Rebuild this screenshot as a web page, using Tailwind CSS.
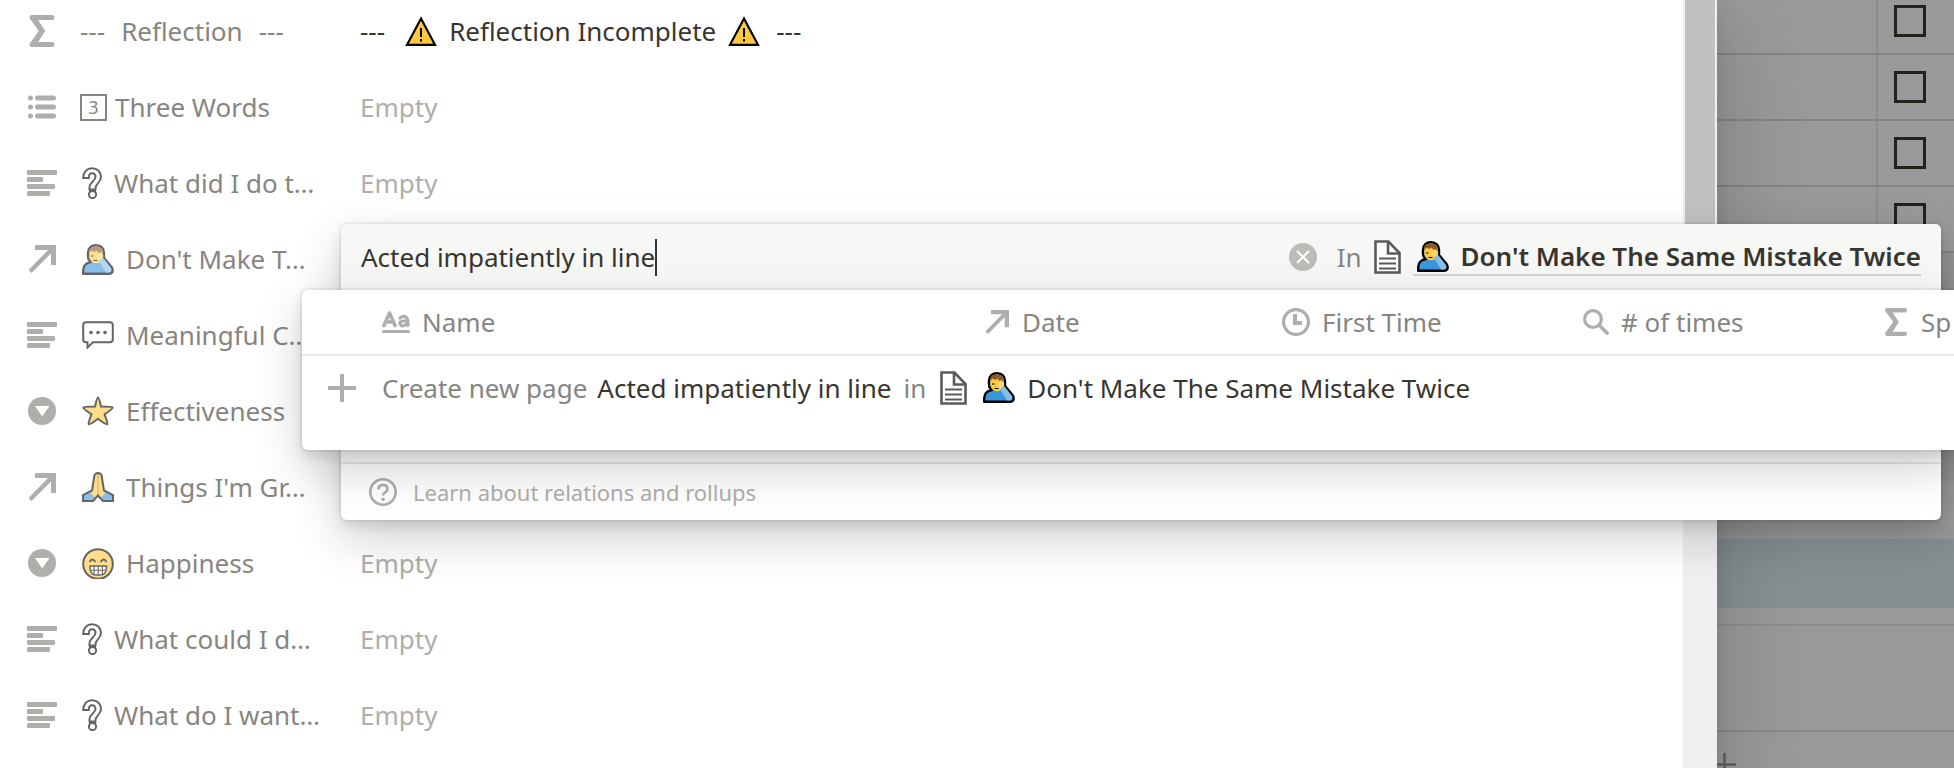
<!DOCTYPE html>
<html lang="en">
<head>
<meta charset="utf-8">
<title>Reflection</title>
<script src="https://cdn.jsdelivr.net/npm/@tailwindcss/browser@4"></script>
</head>
<body class="relative h-screen overflow-hidden bg-[#999] font-['Noto_Sans','Open_Sans',sans-serif] text-[26px] leading-9 text-[#37352f]">

<svg class="hidden" aria-hidden="true">
  <symbol id="sigma" viewBox="0 0 26 32"><path d="M3 2.500H23M3 29.500H23M3.500 3L13 16L3.500 29" fill="none" stroke="currentColor" stroke-width="5" stroke-linecap="round"/><path d="M2 3H8L16 16L8 29H2L10 16Z" fill="currentColor"/></symbol>
  <symbol id="list" viewBox="0 0 28 24"><g fill="currentColor"><circle cx="2.500" cy="3" r="2.500"/><circle cx="2.500" cy="12" r="2.500"/><circle cx="2.500" cy="21" r="2.500"/><rect x="7" y=".5" width="21" height="5" rx="2.500"/><rect x="7" y="9.500" width="21" height="5" rx="2.500"/><rect x="7" y="18.500" width="21" height="5" rx="2.500"/></g></symbol>
  <symbol id="lines" viewBox="0 0 30 26"><g fill="currentColor"><rect width="30" height="5" rx="1"/><rect y="7" width="16" height="5" rx="1"/><rect y="14" width="28" height="5" rx="1"/><rect y="21" width="23" height="5" rx="1"/></g></symbol>
  <symbol id="arrow" viewBox="0 0 28 28"><path d="M7 0H28V20H23V8.500L3.500 28L.5 25L20 5H7Z" fill="currentColor"/></symbol>
  <symbol id="select" viewBox="0 0 28 28"><circle cx="14" cy="14" r="14" fill="currentColor"/><path d="M7 9H21.500L14.200 19.500Z" fill="#fff"/></symbol>
  <symbol id="question" viewBox="0 0 20 32"><path d="M1.200 11C1.200 5 5 1.200 10 1.200C15.500 1.200 19 5 19 10C19 15.500 13.500 17 13.500 21V22.500H7.500V20C7.500 15 13.500 14 13.500 10C13.500 7.500 12 6.300 10 6.300C8 6.300 6.800 7.800 6.800 11Z" fill="#fff" stroke="currentColor" stroke-width="2"/><circle cx="10.500" cy="27.500" r="3.600" fill="#fff" stroke="currentColor" stroke-width="2"/><path d="M7 22H14V25H7Z" fill="currentColor"/></symbol>
  <symbol id="facepalm" viewBox="0 0 32 31"><path d="M7 16C5.500 14 6 12 6 9C6 4 9.500 1.200 14 1.200C19 1.200 22 4.500 22 9V14L29.500 23C31.500 26 31 29.800 27 29.800H1.200V26C1.200 21 5 18.500 9 18Z" fill="#3a96dd" stroke="#000" stroke-width="2.400" stroke-linejoin="round"/><path d="M7.300 9C7.300 4.500 10 2.500 14 2.500C18 2.500 20.800 5 20.800 9V12L18 18C15 20 10.500 20 8.500 16C7 14 7.300 11 7.300 9Z" fill="#ffc83d"/><path d="M7.200 9C7 4.500 10 2.400 14 2.400C18 2.400 20.800 5 20.800 10L18.500 8L16 9L15 6.500L12 8L10 6.500Z" fill="#8e562e"/><path d="M9 12H11.500M11.500 16.500H15.500" stroke="#000" stroke-width="1.200" fill="none"/><path d="M15 10C17 8.500 20 9.500 21.500 12L20 15L17 17C14.500 15 14 12 15 10Z" fill="#ffd670"/><path d="M17 17L20.800 13.500L29 24C30 26.500 28.500 28.600 26 28.600H24Z" fill="#83beec"/></symbol>
  <symbol id="chat" viewBox="0 0 32 28"><path d="M4 1.200H28Q30.800 1.200 30.800 4V18.500Q30.800 21.300 28 21.300H11L5.500 26.500V21.300H4Q1.200 21.300 1.200 18.500V4Q1.200 1.200 4 1.200Z" fill="#fff" stroke="#000" stroke-width="2"/><circle cx="9" cy="11.500" r="1.800"/><circle cx="16" cy="11.500" r="1.800"/><circle cx="23" cy="11.500" r="1.800"/></symbol>
  <symbol id="star" viewBox="0 0 32 30"><path d="M16 1.500Q17 1.500 19 10.500Q30.500 10.500 30.700 11.500Q30.700 12.800 22.500 18.300Q26 27 25.300 28.200Q24 29 16 22.800Q8 29 6.700 28.200Q6 27 9.500 18.300Q1.300 12.800 1.300 11.500Q1.500 10.500 13 10.500Q15 1.500 16 1.500Z" fill="#ffc83d" stroke="#000" stroke-width="2"/></symbol>
  <symbol id="pray" viewBox="0 0 32 30"><path d="M1 29V23L10 18.500L12.500 3Q14 .8 16 1Q18 .8 19.500 3L22 18.500L31 23V29H21L16 23.500L11 29Z" fill="#ffc83d"/><path d="M1 29V23L7.500 19.800L13.500 26L11 29ZM31 29V23L24.500 19.800L18.500 26L21 29Z" fill="#3a96dd"/><path d="M16 2V23" stroke="#d67d00" stroke-width="1.200"/><path d="M1 29V23L10 18.500L12.500 3Q14 .8 16 1Q18 .8 19.500 3L22 18.500L31 23V29H21L16 23.500L11 29Z" fill="none" stroke="#000" stroke-width="2"/></symbol>
  <symbol id="grin" viewBox="0 0 32 31"><ellipse cx="16" cy="16" rx="14.800" ry="14.800" fill="#ffc83d" stroke="#000" stroke-width="2"/><path d="M7.500 14Q10 9 13.500 14M18.500 14Q22 9 24.500 14" fill="none" stroke="#000" stroke-width="1.800"/><path d="M8 18H24.500V20Q24 27 18 27H14Q8.500 27 8 20Z" fill="#fff" stroke="#000" stroke-width="1.500"/><path d="M8 22.300H24.500M12 18V27M16.200 18V27M20.400 18V27" stroke="#000" stroke-width="1.100"/></symbol>
  <symbol id="warning" viewBox="0 0 32 30"><path d="M16 2.500L30 28.800H2Z" fill="#ffc83d" stroke="#000" stroke-width="2.200"/><path d="M16 12V21M16 23V25.500" stroke="#000" stroke-width="2"/></symbol>
  <symbol id="doc" viewBox="0 0 27 34"><path d="M1.500 1.500H14.500L25.500 13V32.500H1.500Z" fill="#fff" stroke="currentColor" stroke-width="2.600"/><path d="M14 2V13.500H25" fill="none" stroke="currentColor" stroke-width="2.600"/><path d="M5 18.500H22M5 23.500H22M5 28.500H22" stroke="currentColor" stroke-width="2.200"/></symbol>
  <symbol id="plus" viewBox="0 0 28 28"><path d="M14 0V28M0 14H28" stroke="currentColor" stroke-width="4"/></symbol>
  <symbol id="title" viewBox="0 0 28 22"><g fill="none" stroke="currentColor" stroke-width="3.600" stroke-linecap="round" stroke-linejoin="round"><path d="M2 14.500L7.500 2L13 14.500M4 11H11"/><path d="M18 7Q21 4.500 24 6Q26 7 26 14.500M26 10H21Q17.500 10.500 18 13Q19 15.500 22 14.500L26 12.500" stroke-width="3.200"/></g><rect y="19" width="28" height="3" rx="1.500" fill="currentColor"/></symbol>
  <symbol id="clock" viewBox="0 0 28 28"><circle cx="14" cy="14" r="12.400" fill="none" stroke="currentColor" stroke-width="3.200"/><path d="M13 6V15H20" fill="none" stroke="currentColor" stroke-width="4"/></symbol>
  <symbol id="search" viewBox="0 0 26 26"><circle cx="10" cy="10" r="8.400" fill="none" stroke="currentColor" stroke-width="3.200"/><path d="M16 16L24 24" stroke="currentColor" stroke-width="3.800" stroke-linecap="round"/></symbol>
  <symbol id="clear" viewBox="0 0 28 28"><circle cx="14" cy="14" r="14" fill="currentColor"/><path d="M8 8L20 20M20 8L8 20" stroke="#fff" stroke-width="2"/></symbol>
  <symbol id="help" viewBox="0 0 28 28"><circle cx="14" cy="14" r="12.700" fill="none" stroke="currentColor" stroke-width="2.600"/><path d="M9.500 11.500Q9.500 7 14 7Q18.500 7 18.500 11Q18.500 13 16 14.500Q14 16 14 17.500" fill="none" stroke="currentColor" stroke-width="2.600"/><circle cx="14" cy="21.300" r="1.700" fill="currentColor"/></symbol>
</svg>

<div class="grid h-full grid-cols-[minmax(0,1fr)_237px]">
  <main class="relative z-10 flex bg-white shadow-[0_10px_20px_rgba(15,15,15,0.1),0_30px_80px_rgba(15,15,15,0.2)]">
    <ul class="flex min-w-0 flex-1 flex-col gap-[14px] overflow-hidden pl-[27px] whitespace-nowrap text-[#afaeab]">
      <li class="flex h-[62px] shrink-0 items-center">
        <svg class="mr-[23px] h-8 w-[30px]"><use href="#sigma"/></svg>
        <span class="flex w-[280px] items-center gap-4 text-[#868580]"><span>---</span> Reflection <span>---</span></span>
        <span class="flex items-center gap-3 text-[#37352f]"><span class="mr-2">---</span> <svg class="h-[30px] w-8"><use href="#warning"/></svg> Reflection Incomplete <svg class="h-[30px] w-8"><use href="#warning"/></svg> <span class="ml-1">---</span></span>
      </li>
      <li class="flex h-[62px] shrink-0 items-center">
        <svg class="mr-[23px] h-6 w-[30px]"><use href="#list"/></svg>
        <span class="flex w-[280px] items-center gap-2 text-[#868580]"><span class="flex size-[27px] items-center justify-center border-2 border-[#868580] text-lg leading-5">3</span>Three Words</span>
        <span>Empty</span>
      </li>
      <li class="flex h-[62px] shrink-0 items-center">
        <svg class="mr-[23px] h-[26px] w-[30px]"><use href="#lines"/></svg>
        <span class="flex w-[280px] items-center gap-3 pl-0.5 text-[#868580]"><svg class="h-8 w-5 text-black opacity-60"><use href="#question"/></svg>What did I do t…</span>
        <span>Empty</span>
      </li>
      <li class="flex h-[62px] shrink-0 items-center">
        <svg class="mr-[23px] h-7 w-[30px]"><use href="#arrow"/></svg>
        <span class="flex w-[280px] items-center gap-3 pl-0.5 text-[#868580]"><svg class="h-[31px] w-8 opacity-60"><use href="#facepalm"/></svg>Don't Make T…</span>
      </li>
      <li class="flex h-[62px] shrink-0 items-center">
        <svg class="mr-[23px] h-[26px] w-[30px]"><use href="#lines"/></svg>
        <span class="flex w-[280px] items-center gap-3 pl-0.5 text-[#868580]"><svg class="h-7 w-8 opacity-60"><use href="#chat"/></svg>Meaningful C…</span>
      </li>
      <li class="flex h-[62px] shrink-0 items-center">
        <svg class="mr-[23px] h-7 w-[30px]"><use href="#select"/></svg>
        <span class="flex w-[280px] items-center gap-3 pl-0.5 text-[#868580]"><svg class="h-[30px] w-8 opacity-60"><use href="#star"/></svg>Effectiveness</span>
      </li>
      <li class="flex h-[62px] shrink-0 items-center">
        <svg class="mr-[23px] h-7 w-[30px]"><use href="#arrow"/></svg>
        <span class="flex w-[280px] items-center gap-3 pl-0.5 text-[#868580]"><svg class="h-[30px] w-8 opacity-60"><use href="#pray"/></svg>Things I'm Gr…</span>
      </li>
      <li class="flex h-[62px] shrink-0 items-center">
        <svg class="mr-[23px] h-7 w-[30px]"><use href="#select"/></svg>
        <span class="flex w-[280px] items-center gap-3 pl-0.5 text-[#868580]"><svg class="h-[31px] w-8 opacity-60"><use href="#grin"/></svg>Happiness</span>
        <span>Empty</span>
      </li>
      <li class="flex h-[62px] shrink-0 items-center">
        <svg class="mr-[23px] h-[26px] w-[30px]"><use href="#lines"/></svg>
        <span class="flex w-[280px] items-center gap-3 pl-0.5 text-[#868580]"><svg class="h-8 w-5 text-black opacity-60"><use href="#question"/></svg>What could I d…</span>
        <span>Empty</span>
      </li>
      <li class="flex h-[62px] shrink-0 items-center">
        <svg class="mr-[23px] h-[26px] w-[30px]"><use href="#lines"/></svg>
        <span class="flex w-[280px] items-center gap-3 pl-0.5 text-[#868580]"><svg class="h-8 w-5 text-black opacity-60"><use href="#question"/></svg>What do I want…</span>
        <span>Empty</span>
      </li>
    </ul>
    <div class="w-[34px] bg-[#f0f0f0] px-0.5"><div class="h-1/2 bg-[#c1c1c1]"></div></div>
  </main>

  <aside class="overflow-hidden">
    <div class="flex h-[55px] border-b-2 border-[#848484]"><div class="w-[161px] border-r-2 border-[#8d8d8d]"></div><input type="checkbox" aria-label="Row 1" class="mt-[5px] ml-4 size-8 appearance-none border-3 border-[#22211c]"></div>
    <div class="flex h-[66px] border-b-2 border-[#848484]"><div class="w-[161px] border-r-2 border-[#8d8d8d]"></div><input type="checkbox" aria-label="Row 2" class="mt-4 ml-4 size-8 appearance-none border-3 border-[#22211c]"></div>
    <div class="flex h-[66px] border-b-2 border-[#848484]"><div class="w-[161px] border-r-2 border-[#8d8d8d]"></div><input type="checkbox" aria-label="Row 3" class="mt-4 ml-4 size-8 appearance-none border-3 border-[#22211c]"></div>
    <div class="flex h-[66px] border-b-2 border-[#848484]"><div class="w-[161px] border-r-2 border-[#8d8d8d]"></div><input type="checkbox" aria-label="Row 4" class="mt-4 ml-4 size-8 appearance-none border-3 border-[#22211c]"></div>
    <div class="h-[228px] bg-[#939393]"></div>
    <div class="h-[58px]"></div>
    <div class="h-[69px] bg-[#869093]"></div>
    <div class="h-[18px] border-b-2 border-[#8d8d8d]"></div>
    <div class="h-[106px] border-b-2 border-[#888]"></div>
    <button type="button" aria-label="New row" class="-ml-1 block pt-[21px] text-[#5f5e5c]"><svg class="size-[23px]" viewBox="0 0 28 28"><path d="M14 0V28M0 14H28" stroke="currentColor" stroke-width="3"/></svg></button>
  </aside>
</div>

<section aria-label="Relation" class="absolute top-[224px] right-[13px] left-[341px] z-20 flex h-[296px] flex-col rounded-md bg-white shadow-[0_0_0_2px_rgba(15,15,15,0.05),0_6px_12px_rgba(15,15,15,0.1),0_18px_48px_rgba(15,15,15,0.2)]">
  <div class="flex h-[66px] items-center rounded-t-md bg-[#f7f7f5] px-5">
    <input type="text" aria-label="Search pages" value="Acted impatiently in line" class="h-[37px] [field-sizing:content] bg-transparent outline-none">
    <span class="h-[37px] w-0.5 bg-[#37352f]"></span>
    <button type="button" aria-label="Clear" class="mr-5 ml-auto text-[#bcbbb8]"><svg class="size-7"><use href="#clear"/></svg></button>
    <span class="mr-3 text-[#868580]">In</span>
    <svg class="mr-3 h-[34px] w-[27px] text-[#5d5b59]"><use href="#doc"/></svg>
    <a href="#" class="flex items-center gap-3 border-b-2 border-[#d3d3d0] pl-1 font-semibold"><svg class="h-[31px] w-8"><use href="#facepalm"/></svg>Don't Make The Same Mistake Twice</a>
  </div>
  <a href="#" class="mt-auto flex h-[58px] items-center gap-4 border-t-2 border-[#e8e8e7] pl-7 text-[22px] text-[#afaeab]"><svg class="size-7"><use href="#help"/></svg>Learn about relations and rollups</a>
</section>

<section aria-label="Results" class="absolute top-[290px] right-0 left-[302px] z-30 h-40 rounded-l-md bg-white shadow-[0_0_0_2px_rgba(15,15,15,0.05),0_6px_12px_rgba(15,15,15,0.1),0_18px_48px_rgba(15,15,15,0.2)]">
  <table class="w-full table-fixed whitespace-nowrap">
    <thead>
      <tr class="h-[65px] border-b-2 border-[#ebebea] text-left text-[#868580]">
        <th class="w-20"></th>
        <th class="w-[602px] p-0 font-normal"><span class="flex items-center gap-3"><svg class="h-[22px] w-7 text-[#afaeab]"><use href="#title"/></svg>Name</span></th>
        <th class="w-[298px] p-0 font-normal"><span class="flex items-center gap-3"><svg class="h-6 w-[26px] text-[#afaeab]"><use href="#arrow"/></svg>Date</span></th>
        <th class="w-[301px] p-0 font-normal"><span class="flex items-center gap-3"><svg class="size-7 text-[#afaeab]"><use href="#clock"/></svg>First Time</span></th>
        <th class="w-[300px] p-0 font-normal"><span class="flex items-center gap-3"><svg class="size-[26px] text-[#afaeab]"><use href="#search"/></svg># of times</span></th>
        <th class="p-0 font-normal"><span class="flex items-center gap-3"><svg class="h-7 w-[26px] shrink-0 text-[#afaeab]"><use href="#sigma"/></svg>Sp</span></th>
      </tr>
    </thead>
    <tbody>
      <tr class="h-16">
        <td class="p-0 pl-[26px] text-[#afaeab]"><svg class="size-7"><use href="#plus"/></svg></td>
        <td colspan="5" class="p-0"><button type="button" class="flex items-center"><span class="mr-2.5 text-[#868580]">Create new page</span>Acted impatiently in line<span class="mx-3 text-[#868580]">in</span><svg class="mr-4 ml-0.5 h-[34px] w-[27px] text-[#5d5b59]"><use href="#doc"/></svg><svg class="mr-3 h-[31px] w-8"><use href="#facepalm"/></svg>Don't Make The Same Mistake Twice</button></td>
      </tr>
    </tbody>
  </table>
</section>
</body>
</html>
